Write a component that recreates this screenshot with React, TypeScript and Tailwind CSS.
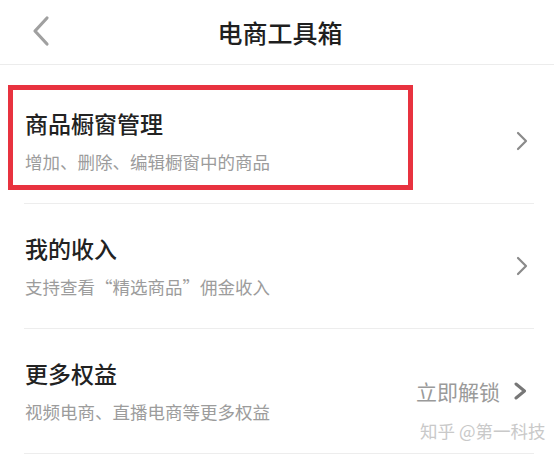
import React from 'react';

const font = { fontFamily: '"Noto Sans CJK SC", "Noto Sans", sans-serif' };

interface RowProps {
  title: string;
  desc: string;
  action?: string;
}

function Chevron({ bold }: { bold?: boolean }) {
  if (bold) {
    return (
      <svg width="16" height="18" viewBox="0 0 16 18" className="text-[#777]">
        <path d="M4 2 L12.5 9 L4 16" fill="none" stroke="currentColor" strokeWidth="3" strokeLinecap="round" strokeLinejoin="round" />
      </svg>
    );
  }
  return (
    <svg width="12" height="20" viewBox="0 0 12 20" className="text-[#8a8a8a]">
      <path d="M2 2 L10 10 L2 18" fill="none" stroke="currentColor" strokeWidth="2.2" strokeLinecap="round" strokeLinejoin="round" />
    </svg>
  );
}

function Row({ title, desc, action }: RowProps) {
  return (
    <div className="ml-[24px] mr-[20px] h-[125px] border-b border-[#ededed] flex items-center justify-between">
      <div className="flex flex-col pl-[1px]">
        <div className="text-[23px] leading-[28px] font-medium text-[#222]">{title}</div>
        <div className="mt-[14px] text-[17.5px] leading-[22px] text-[#9c9c9c]">{desc}</div>
      </div>
      <div className="flex items-center pr-[6px]">
        {action && <span className="text-[21px] leading-[28px] text-[#9a9a9a] mr-[12px]">{action}</span>}
        <Chevron bold={!!action} />
      </div>
    </div>
  );
}

export default function App() {
  return (
    <div className="relative w-[554px] h-[457px] bg-white overflow-hidden" style={font}>
      <div className="h-[65px] border-b border-[#ececec] flex items-center relative">
        <svg width="20" height="32" viewBox="0 0 20 32" className="absolute left-[31px] top-[15px] text-[#a0a0a0]">
          <path d="M16 3 L4 16 L16 29" fill="none" stroke="currentColor" strokeWidth="3.2" strokeLinecap="round" strokeLinejoin="round" />
        </svg>
        <div className="w-full text-center pl-[6px] text-[25px] leading-[32px] font-medium text-[#1f1f1f]">电商工具箱</div>
      </div>

      <div className="pt-[14px]">
        <Row title="商品橱窗管理" desc="增加、删除、编辑橱窗中的商品" />
        <Row title="我的收入" desc="支持查看“精选商品”佣金收入" />
        <Row title="更多权益" desc="视频电商、直播电商等更多权益" action="立即解锁" />
      </div>

      <div className="absolute left-[8px] top-[85px] w-[405px] h-[105px] border-[5px] border-[#e8323f]" />

      <div className="absolute left-[420px] top-[417px] text-[17.5px] leading-[28px] text-[#c9c9c9] whitespace-nowrap">
        知乎 @第一科技
      </div>
    </div>
  );
}
